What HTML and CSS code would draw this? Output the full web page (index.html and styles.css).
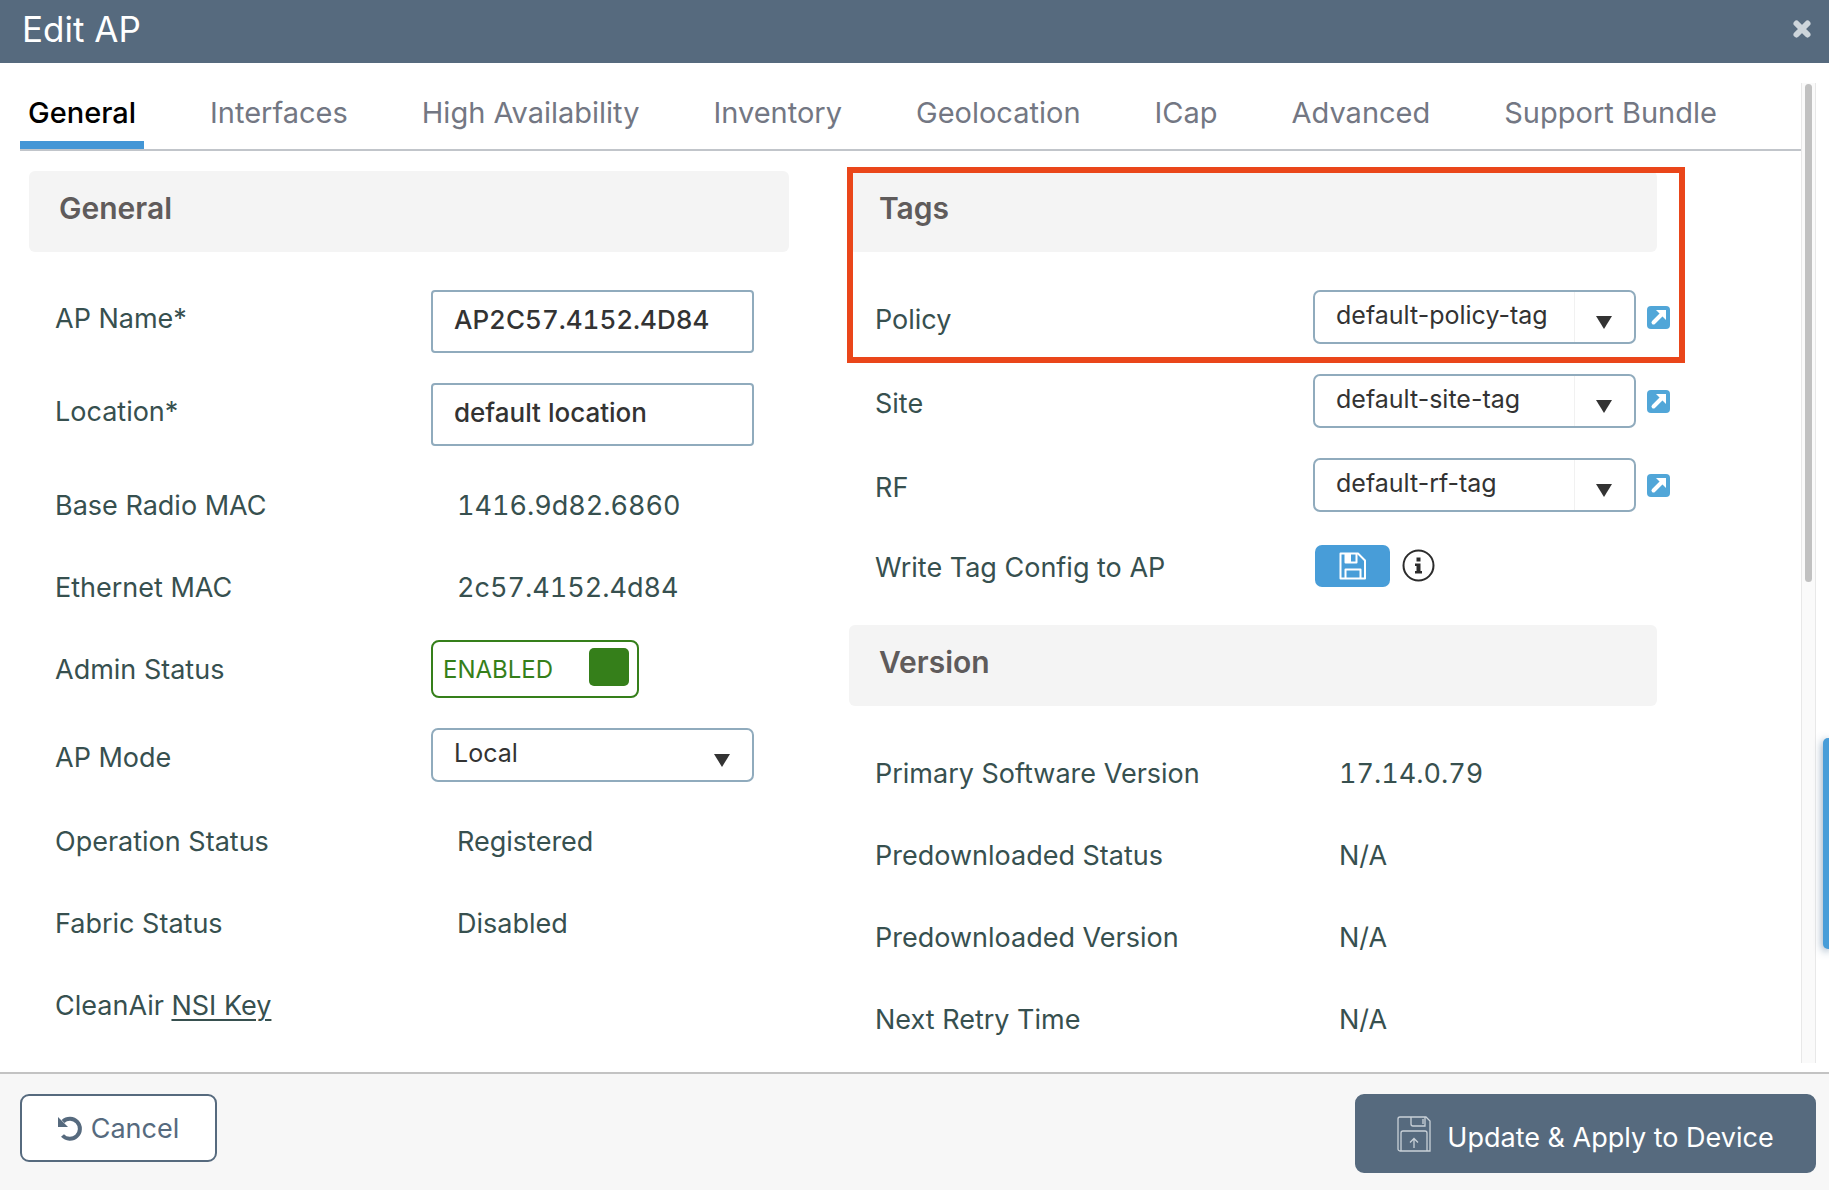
FILE: index.html
```html
<!DOCTYPE html>
<html lang="en">
<head>
<meta charset="utf-8">
<title>Edit AP</title>
<link rel="stylesheet" href="styles.css">
</head>
<body>
<div class="dialog">
  <header class="dialog-header">
    <h1 class="dialog-title">Edit AP</h1>
    <button class="close" type="button" aria-label="Close">
      <svg width="20" height="20" viewBox="0 0 20 20"><path d="M4.500 4.500 15.500 15.500M15.500 4.500 4.500 15.500" stroke="#cdd5db" stroke-width="6" stroke-linecap="round"/></svg>
    </button>
  </header>

  <div class="dialog-body">
    <main class="content">
      <nav class="tabs">
        <a class="tab active" href="#general">General</a>
        <a class="tab" href="#interfaces">Interfaces</a>
        <a class="tab" href="#ha">High Availability</a>
        <a class="tab" href="#inventory">Inventory</a>
        <a class="tab" href="#geolocation">Geolocation</a>
        <a class="tab" href="#icap">ICap</a>
        <a class="tab" href="#advanced">Advanced</a>
        <a class="tab" href="#bundle">Support Bundle</a>
      </nav>

      <div class="columns">
        <div class="column column-left">
          <section>
            <h2 class="section-title">General</h2>
            <div class="rows">
              <div class="row row-input"><label for="ap-name">AP Name*</label><input class="text-box" id="ap-name" type="text" value="AP2C57.4152.4D84"></div>
              <div class="row row-input"><label for="location">Location*</label><input class="text-box" id="location" type="text" value="default location"></div>
              <div class="row row-text"><span>Base Radio MAC</span><span class="value">1416.9d82.6860</span></div>
              <div class="row row-text"><span>Ethernet MAC</span><span class="value">2c57.4152.4d84</span></div>
              <div class="row"><span>Admin Status</span>
                <label class="toggle"><input class="toggle-input" type="checkbox" checked aria-label="Admin Status"><span>ENABLED</span><span class="toggle-knob"></span></label>
              </div>
              <div class="row row-select"><label for="mode">AP Mode</label>
                <div class="select-wrap"><select class="select" id="mode"><option>Local</option></select></div>
              </div>
              <div class="row row-text"><span>Operation Status</span><span class="value">Registered</span></div>
              <div class="row row-text"><span>Fabric Status</span><span class="value">Disabled</span></div>
              <div class="row row-text"><span>CleanAir <a class="key-link" href="#nsi">NSI Key</a></span></div>
            </div>
          </section>
        </div>

        <div class="column column-right">
          <section class="tags">
            <h2 class="section-title">Tags</h2>
            <div class="rows">
              <div class="row row-select"><label for="policy">Policy</label>
                <div class="control">
                  <div class="select-wrap split"><select class="select" id="policy"><option>default-policy-tag</option></select></div>
                  <a class="jump" href="#policy-tag" aria-label="Open policy tag"><svg width="23" height="23" viewBox="0 0 23 23"><rect width="23" height="23" rx="4" fill="#51a6d8"/><path d="M6.500 16.500 14 9" stroke="#fff" stroke-width="4" stroke-linecap="round"/><path d="M9 4h10v10z" fill="#fff"/></svg></a>
                </div>
              </div>
              <div class="row row-select"><label for="site">Site</label>
                <div class="control">
                  <div class="select-wrap split"><select class="select" id="site"><option>default-site-tag</option></select></div>
                  <a class="jump" href="#site-tag" aria-label="Open site tag"><svg width="23" height="23" viewBox="0 0 23 23"><rect width="23" height="23" rx="4" fill="#51a6d8"/><path d="M6.500 16.500 14 9" stroke="#fff" stroke-width="4" stroke-linecap="round"/><path d="M9 4h10v10z" fill="#fff"/></svg></a>
                </div>
              </div>
              <div class="row row-select"><label for="rf">RF</label>
                <div class="control">
                  <div class="select-wrap split"><select class="select" id="rf"><option>default-rf-tag</option></select></div>
                  <a class="jump" href="#rf-tag" aria-label="Open RF tag"><svg width="23" height="23" viewBox="0 0 23 23"><rect width="23" height="23" rx="4" fill="#51a6d8"/><path d="M6.500 16.500 14 9" stroke="#fff" stroke-width="4" stroke-linecap="round"/><path d="M9 4h10v10z" fill="#fff"/></svg></a>
                </div>
              </div>
              <div class="row row-write"><span>Write Tag Config to AP</span>
                <div class="control">
                  <button class="write" type="button" aria-label="Write tag config"><svg width="28" height="28" viewBox="0 0 28 28" fill="none" stroke="#fff" stroke-width="2" stroke-linejoin="round"><path d="M1.500 1.500H19l7 7v18H1.500zM6.500 26V17.500h15V26"/><path d="M6.500 2v8.500h11V2"/><path d="M6 2h6v8H6z" fill="#fff" stroke="none"/></svg></button>
                  <svg class="info" width="33" height="33" viewBox="0 0 33 33"><circle cx="16.500" cy="16.500" r="15" fill="none" stroke="#2c2c2c" stroke-width="2"/><path d="M14.500 8.500h4v4h-4zM13 14.500h5.500v7.500H20v2.500h-7V22h1.500v-5H13z" fill="#2c2c2c"/></svg>
                </div>
              </div>
            </div>
            <div class="highlight"></div>
          </section>

          <section>
            <h2 class="section-title">Version</h2>
            <div class="rows">
              <div class="row row-text"><span>Primary Software Version</span><span class="value">17.14.0.79</span></div>
              <div class="row row-text"><span>Predownloaded Status</span><span class="value">N/A</span></div>
              <div class="row row-text"><span>Predownloaded Version</span><span class="value">N/A</span></div>
              <div class="row row-text"><span>Next Retry Time</span><span class="value">N/A</span></div>
            </div>
          </section>
        </div>
      </div>
    </main>
    <div class="scrollbar"><div class="scrollbar-thumb"></div></div>
  </div>

  <footer class="dialog-footer">
    <button class="btn btn-cancel" type="button"><svg width="25" height="25" viewBox="0 0 25 25"><path d="M5 5.500A10 10 0 1 1 4.500 19.500" fill="none" stroke="#566a7e" stroke-width="4"/><path d="M0 1v10h10z" fill="#566a7e"/></svg>Cancel</button>
    <button class="btn btn-apply" type="button"><svg width="34" height="36" viewBox="0 0 34 36" fill="none" stroke="#c9d1d8" stroke-width="1.300"><path d="M3 1H29l4 4V35H3a2 2 0 0 1-2-2V3a2 2 0 0 1 2-2z"/><path d="M14 1v7a2 2 0 0 0 2 2h12V1M26 3v5M4 35V17a2 2 0 0 1 2-2H28a2 2 0 0 1 2 2V35M17 32V23M13 26.500 17 22.500 21 26.500"/></svg><span class="btn-text">Update &amp; Apply to Device</span></button>
  </footer>
  <div class="side-handle"></div>
</div>
</body>
</html>
```

FILE: styles.css
```css
* { box-sizing: border-box; }

body {
  margin: 0;
  font-family: Inter, "Liberation Sans", sans-serif;
  font-size: 27px;
  color: #37504f;
  background: #fff;
}

button, input, select { font-family: inherit; margin: 0; }
a { color: inherit; text-decoration: none; }

.dialog {
  position: relative;
  display: flex;
  flex-direction: column;
  min-height: 100vh;
}

.dialog-header {
  display: flex;
  justify-content: space-between;
  align-items: center;
  height: 63px;
  padding: 0 17px 6px 22px;
  background: #566a7e;
}

.dialog-title {
  margin: 0;
  font-size: 35px;
  font-weight: 400;
  line-height: 40px;
  color: #fff;
}

.close {
  display: flex;
  padding: 0;
  border: 0;
  background: none;
}

.dialog-body {
  display: flex;
  flex: 1;
  padding: 20px 13px 9px 20px;
}

.content { flex: 1; }

.tabs {
  display: flex;
  gap: 58px;
  height: 68px;
  border-bottom: 2px solid #c1c5ca;
}

.tab {
  padding: 0 8px;
  font-size: 29px;
  line-height: 60px;
  color: #737783;
  white-space: nowrap;
}

.tab.active {
  font-weight: 500;
  color: #000;
  border-bottom: 8px solid #4396d6;
}

.columns {
  display: flex;
  gap: 60px;
  padding: 20px 144px 0 9px;
}

.column { min-width: 0; }
.column-left { flex: 760; }
.column-right { flex: 808; }

.section-title {
  margin: 0;
  height: 81px;
  padding: 0 30px;
  border-radius: 6px;
  font-size: 30px;
  font-weight: 600;
  line-height: 75px;
  color: #5f5b5b;
  background: #f4f4f4;
}

.rows {
  display: flex;
  flex-direction: column;
  gap: 30px;
  padding: 38px 0 0 26px;
}

.row {
  display: grid;
  grid-template-columns: 376px 1fr;
  align-items: center;
  white-space: nowrap;
}

.column-right .row { grid-template-columns: 438px 1fr; }

.row-input > label { padding-bottom: 6px; }
.row-select > label { padding-top: 4px; }

.row-text {
  height: 52px;
  padding-top: 6px;
}

.row-write { height: 50px; }

.value {
  padding-left: 26px;
  font-variant-numeric: tabular-nums;
}

.text-box {
  width: 323px;
  height: 63px;
  padding: 0 21px 4px;
  border: 2px solid #90abbd;
  border-radius: 4px;
  font-size: 26px;
  font-weight: 500;
  font-variant-numeric: tabular-nums;
  color: #333;
  background: #fff;
}

.select-wrap {
  position: relative;
  width: 323px;
}

.select {
  display: block;
  appearance: none;
  width: 100%;
  height: 54px;
  padding: 0 60px 4px 21px;
  border: 2px solid #90abbd;
  border-radius: 7px;
  font-size: 25px;
  color: #333;
  background: #fff;
}

.select-wrap::after {
  content: "";
  position: absolute;
  right: 24px;
  top: 26px;
  border: 8px solid transparent;
  border-top: 13px solid #333;
  border-bottom: 0;
}

.split::before {
  content: "";
  position: absolute;
  right: 61px;
  top: 2px;
  bottom: 2px;
  border-left: 1px solid #f1f1f1;
}

.toggle {
  display: flex;
  align-items: center;
  justify-content: space-between;
  width: 208px;
  height: 58px;
  padding: 0 8px 0 10px;
  border: 2px solid #357f1a;
  border-radius: 8px;
  font-size: 24px;
  color: #357f1a;
}

.toggle-input {
  position: absolute;
  opacity: 0;
}

.toggle-knob {
  width: 40px;
  height: 38px;
  margin-bottom: 4px;
  border-radius: 5px;
  background: #357f1a;
}

.control {
  display: flex;
  align-items: center;
}

.jump {
  display: flex;
  margin-left: 11px;
}

.write {
  display: flex;
  align-items: center;
  justify-content: center;
  width: 75px;
  height: 42px;
  margin-left: 2px;
  padding: 0;
  border: 0;
  border-radius: 7px;
  background: #489dd8;
}

.info { margin-left: 12px; }

.row-write .control { padding-bottom: 3px; }

.key-link {
  text-decoration: underline;
  text-decoration-thickness: 2px;
  text-underline-offset: 4px;
}

.tags {
  position: relative;
  padding-bottom: 33px;
}

.highlight {
  position: absolute;
  top: -4px;
  left: -2px;
  right: -28px;
  height: 196px;
  border: 6px solid #ea461a;
  pointer-events: none;
}

.scrollbar {
  width: 15px;
  padding: 1px 3px;
  border: solid #e8e8e8;
  border-width: 0 1px;
  background: #fafafa;
}

.scrollbar-thumb {
  height: 498px;
  border-radius: 4px;
  background: #c1c1c1;
}

.dialog-footer {
  display: flex;
  justify-content: space-between;
  align-items: flex-start;
  height: 118px;
  padding: 20px 13px 0 20px;
  border-top: 2px solid #c3c3c3;
  background: #f7f7f7;
}

.btn {
  display: flex;
  align-items: center;
  justify-content: center;
  border: 2px solid #566a7e;
  border-radius: 9px;
  font-size: 27px;
}

.btn-cancel {
  gap: 8px;
  width: 197px;
  height: 68px;
  color: #566a7e;
  background: #fff;
}

.btn-apply {
  gap: 16px;
  width: 461px;
  height: 79px;
  color: #fff;
  background: #566a7e;
}

.btn-text { padding-top: 8px; }

.side-handle {
  position: absolute;
  right: 0;
  top: 738px;
  width: 6px;
  height: 211px;
  border-radius: 5px 0 0 5px;
  background: #489dd8;
  box-shadow: 0 2px 9px rgba(50, 90, 130, 0.7);
}
```
